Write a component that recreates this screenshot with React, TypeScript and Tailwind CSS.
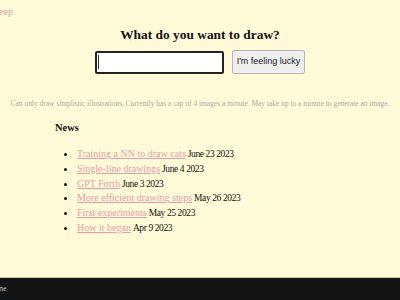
import React from "react";

const news = [
  ["Training a NN to draw cats", "June 23 2023"],
  ["Single-line drawings", "June 4 2023"],
  ["GPT Forth", "June 3 2023"],
  ["More efficient drawing steps", "May 26 2023"],
  ["First experiments", "May 25 2023"],
  ["How it began", "Apr 9 2023"],
];

export default function App() {
  return (
    <div
      className="w-[400px] h-[300px] overflow-hidden flex flex-col bg-[#fffbd8]"
      style={{ fontFamily: '"Liberation Serif", serif' }}
    >
      <div className="h-[20px] pt-[6px] text-[10px] leading-[12px] text-[#ec9aab] -ml-[1px]">
        eep
      </div>
      <div className="flex flex-col items-center">
        <h1 className="mt-[7px] text-[13.4px] leading-[16px] font-bold text-[#111]">
          What do you want to draw?
        </h1>
        <div className="mt-[7px] flex items-center gap-[8px]">
          <div className="w-[129px] h-[23px] bg-white border-[2px] border-[#222] rounded-[2px] flex items-center pl-[1px]">
            <div className="w-[1px] h-[14px] bg-[#333]" />
          </div>
          <button
            className="w-[73px] h-[24px] bg-[#efefef] border border-[#b5b5b5] rounded-[2px] text-[9px] text-[#222]"
            style={{ fontFamily: '"Liberation Sans", Arial, sans-serif' }}
          >
            I'm feeling lucky
          </button>
        </div>
        <p className="mt-[25px] text-[7.45px] leading-[10px] text-[#aaaaa2] whitespace-nowrap">
          Can only draw simplistic illustrations. Currently has a cap of 4 images a minute. May take up to a minute to generate an image.
        </p>
      </div>
      <div className="pl-[55px] mt-[13px]">
        <h2 className="text-[10.5px] leading-[12px] font-bold text-[#111]">News</h2>
        <ul className="mt-[11px] pl-[22px] list-disc text-[#111]">
          {news.map(([t, d]) => (
            <li key={t} className="h-[14.8px] leading-[14px] marker:text-[11px]">
              <a className="text-[10px] text-[#ec9aab] underline">{t}</a>
              <span className="ml-[2px] text-[9.5px] tracking-[-0.4px]">{d}</span>
            </li>
          ))}
        </ul>
      </div>
      <div className="mt-auto h-[23px] border-t border-[#cfc6a6] bg-[#141414] flex items-center">
        <span className="text-[8px] text-[#c0c0c0] -ml-[1px]">ne</span>
      </div>
    </div>
  );
}
